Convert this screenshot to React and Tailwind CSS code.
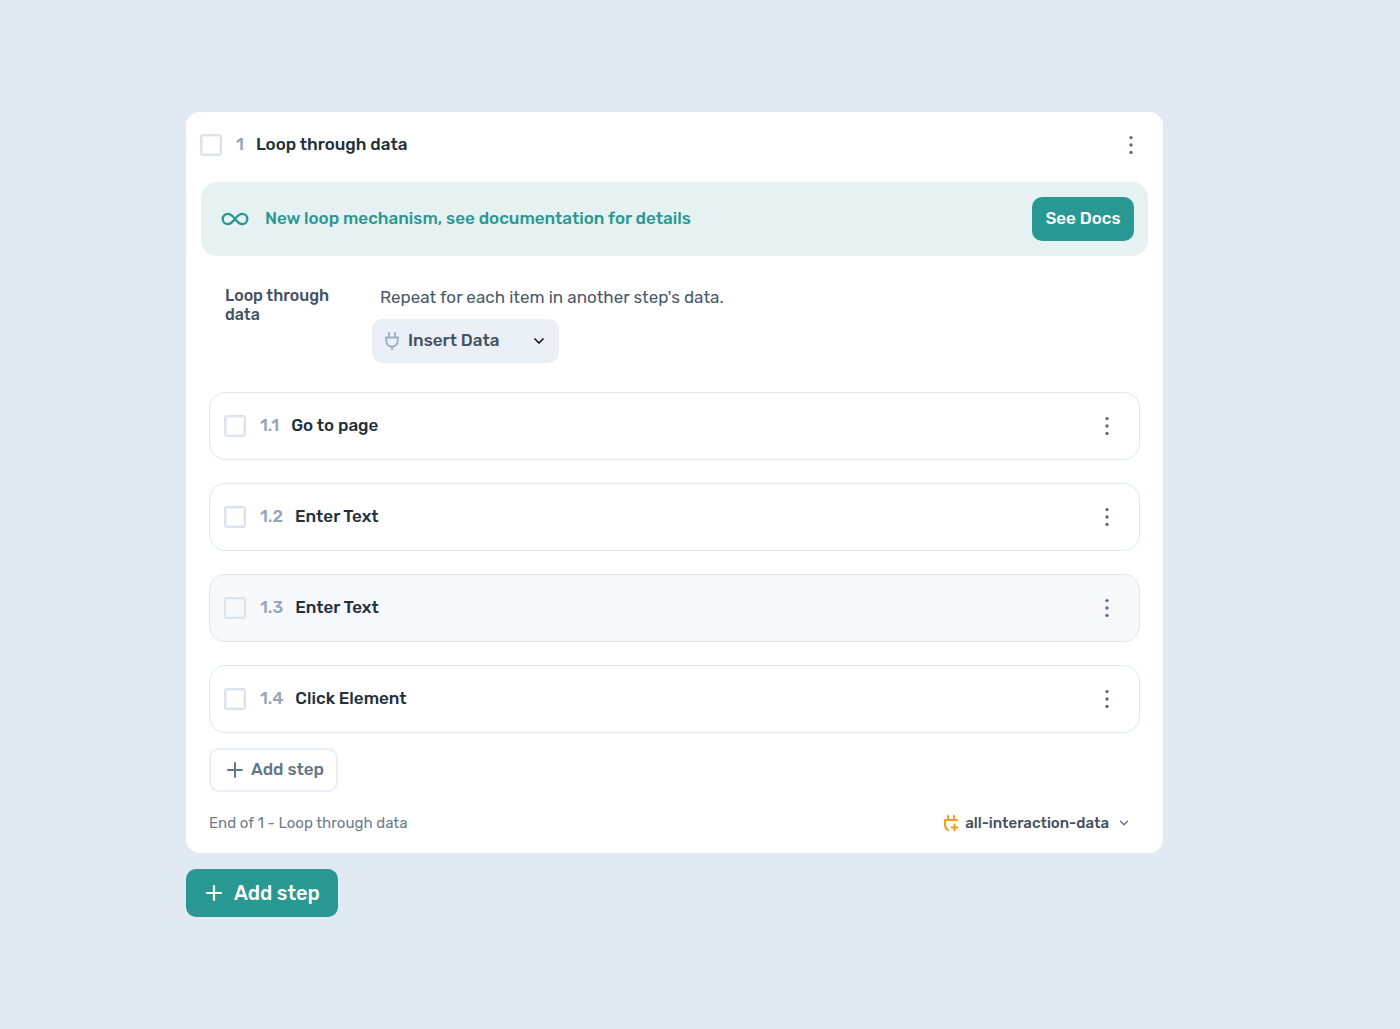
import { ChevronDown, Plus } from "lucide-react";

const steps = [
  { number: "1.1", title: "Go to page" },
  { number: "1.2", title: "Enter Text" },
  { number: "1.3", title: "Enter Text", active: true },
  { number: "1.4", title: "Click Element" },
];

function InfinityIcon() {
  return (
    <svg width="28" height="14" viewBox="0 0 28 14" fill="none" stroke="currentColor" strokeWidth="2.3" aria-hidden="true">
      <path d="M14 7c-2.600-3.400-4.600-5.100-7.200-5.100a5.100 5.100 0 0 0 0 10.200C9.400 12.100 11.400 10.400 14 7s4.600-5.100 7.200-5.100a5.100 5.100 0 0 1 0 10.200C18.600 12.100 16.600 10.400 14 7z" />
    </svg>
  );
}

function PlugIcon() {
  return (
    <svg width="16" height="20" viewBox="0 0 16 20" fill="none" stroke="currentColor" strokeWidth="1.8" aria-hidden="true">
      <path d="M5 1v5M11 1v5M1 6.500h14M2.300 6.500V10a5.700 5.700 0 0 0 11.400 0V6.500M8 15.500v3.500" />
    </svg>
  );
}

function PlugPlusIcon() {
  return (
    <svg width="16" height="18" viewBox="0 0 16 18" fill="none" stroke="currentColor" strokeWidth="2" strokeLinecap="round" aria-hidden="true">
      <path d="M5 2v4M11 2v4M2 6h12M2 6v4.500c0 2.600 1.200 4.500 3 5.500M11.500 10.500v6M8.500 13.500h6" />
    </svg>
  );
}

function MenuButton({ label }) {
  return (
    <button type="button" aria-label={label} className="flex h-8 w-6 items-center justify-center text-[#5a6d84]">
      <svg width="4" height="20" viewBox="0 0 4 20" fill="currentColor" aria-hidden="true">
        <circle cx="2" cy="2.600" r="1.700" />
        <circle cx="2" cy="10" r="1.700" />
        <circle cx="2" cy="17.400" r="1.700" />
      </svg>
    </button>
  );
}

function StepHeading({ number, title }) {
  return (
    <label className="flex items-center text-[17px] font-medium">
      <input
        type="checkbox"
        className="mr-[14px] size-[22px] appearance-none rounded-[3px] border-[2px] border-[#dbe4ed] outline-1 -outline-offset-3 outline-[#eef2f7] checked:bg-[#299893]"
      />
      <span className="mr-3 text-[#94a4ba]">{number}</span>
      <span className="text-[#222f3d]">{title}</span>
    </label>
  );
}

export default function App() {
  return (
    <main className="min-h-screen bg-[#e1e9f2] pt-28 pr-[237px] pb-28 pl-[186px] font-['Rubik','Roboto',sans-serif]">
      <section className="rounded-[14px] bg-white">
        <div className="flex h-[65px] items-center justify-between pr-5 pl-[14px]">
          <StepHeading number="1" title="Loop through data" />
          <MenuButton label="Options for step 1" />
        </div>

        <div className="mx-[15px] mt-[5px] flex items-center rounded-2xl bg-[#e6f1f2] py-[15px] pr-[14px] pl-5 text-[#299893]">
          <InfinityIcon />
          <p className="ml-4 flex-1 text-[17px] font-medium">New loop mechanism, see documentation for details</p>
          <a
            href="#docs"
            className="flex h-11 w-[102px] items-center justify-center rounded-[10px] bg-[#299893] text-[17px] font-medium text-white"
          >
            See Docs
          </a>
        </div>

        <div className="mt-[30px] flex pr-10 pl-[39px]">
          <h2 className="w-[147px] pr-8 text-base leading-[19px] font-medium text-[#435163]">Loop through data</h2>
          <div>
            <p className="pl-2 text-[17px] leading-[22px] text-[#4b596b]">Repeat for each item in another step's data.</p>
            <button
              type="button"
              className="mt-[11px] flex h-11 w-[187px] items-center rounded-[10px] bg-[#eaeff6] px-3 text-[17px] font-medium text-[#435163]"
            >
              <span className="text-[#9bafc4]">
                <PlugIcon />
              </span>
              <span className="ml-2 flex-1 text-left">Insert Data</span>
              <ChevronDown size={16} strokeWidth={2.600} className="text-[#111820]" />
            </button>
          </div>
        </div>

        <ol className="mx-[23px] mt-[29px] flex flex-col gap-[23px]">
          {steps.map((step) => (
            <li
              key={step.number}
              className={`flex h-[68px] items-center justify-between rounded-2xl border border-[#dfe7ef] pr-5 pl-[14px] ${
                step.active ? "bg-[#f6f8fc]" : "bg-white"
              }`}
            >
              <StepHeading number={step.number} title={step.title} />
              <MenuButton label={`Options for step ${step.number}`} />
            </li>
          ))}
        </ol>

        <button
          type="button"
          className="mt-[15px] ml-[23px] flex h-11 items-center gap-1 rounded-[10px] border-2 border-[#e9eff6] pr-3 pl-3 text-[17px] font-medium text-[#64748a]"
        >
          <Plus size={24} strokeWidth={2} />
          Add step
        </button>

        <div className="mt-[19px] flex items-center justify-between pr-8 pb-[18px] pl-[23px] text-[15px] leading-6">
          <p className="text-[#6d7c90]">End of 1 - Loop through data</p>
          <button type="button" className="flex items-center font-medium text-[#435163]">
            <span className="text-[#fa9d12]">
              <PlugPlusIcon />
            </span>
            <span className="mr-2 ml-[6px]">all-interaction-data</span>
            <ChevronDown size={14} strokeWidth={2.400} className="text-[#64748a]" />
          </button>
        </div>
      </section>

      <button
        type="button"
        className="mt-4 flex h-12 items-center gap-2 rounded-[10px] bg-[#299893] pr-[18px] pl-4 text-xl font-medium text-white"
      >
        <Plus size={24} strokeWidth={2.200} />
        Add step
      </button>
    </main>
  );
}
